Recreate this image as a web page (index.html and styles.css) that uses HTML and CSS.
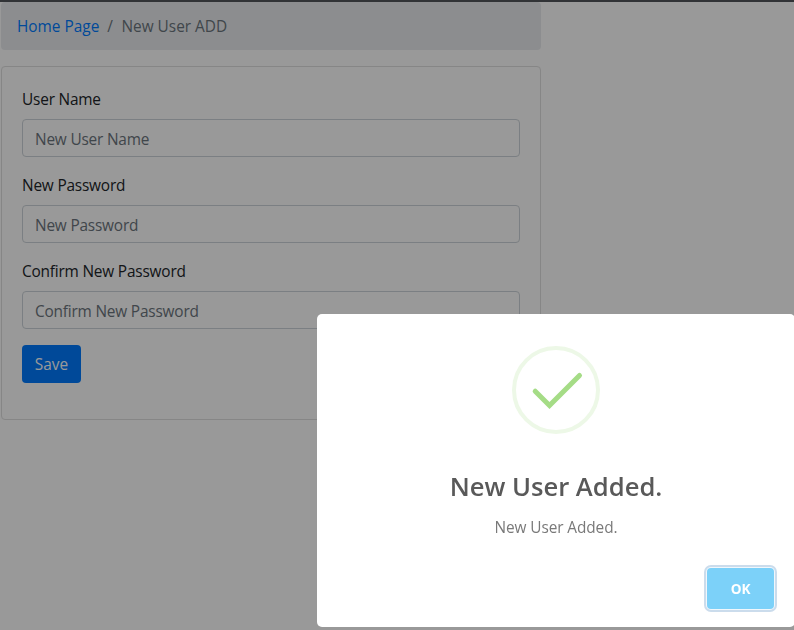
FILE: index.html
```html
<!DOCTYPE html>
<html lang="en">
<head>
<meta charset="utf-8">
<title>New User ADD</title>
<link rel="stylesheet" href="styles.css">
</head>
<body>
<div class="topbar"></div>
<main class="page">
  <nav class="breadcrumb"><a class="home" href="#">Home Page</a><span class="slash">/</span><span class="current">New User ADD</span></nav>
  <form class="card">
    <label class="label" for="user">User Name</label>
    <input class="input" id="user" placeholder="New User Name">
    <label class="label" for="pass">New Password</label>
    <input class="input" id="pass" placeholder="New Password">
    <label class="label" for="confirm">Confirm New Password</label>
    <input class="input" id="confirm" placeholder="Confirm New Password">
    <button class="save" type="button">Save</button>
  </form>
</main>
<div class="overlay">
  <section class="modal">
    <svg class="icon" width="88" height="88" viewBox="0 0 88 88">
      <circle cx="44" cy="44" r="42" fill="none" stroke="#edf8e7" stroke-width="4"/>
      <path d="M23.2 45.2 37.5 59.5 67.5 29.5" fill="none" stroke="#a5dc86" stroke-width="5" stroke-linecap="round"/>
    </svg>
    <h2 class="title">New User Added.</h2>
    <p class="text">New User Added.</p>
    <div class="footer"><button class="ok" type="button">OK</button></div>
  </section>
</div>
</body>
</html>
```
FILE: styles.css
```css
* { box-sizing: border-box; }
body {
  margin: 0;
  height: 630px;
  overflow: hidden;
  background: #fff;
  color: #212529;
  font: 15.4px/24px "Open Sans", "Noto Sans", sans-serif;
  letter-spacing: -.19px;
}
.topbar { height: 2px; background: #53565a; }
.page { width: 541px; padding-left: 1px; }
.breadcrumb {
  display: flex;
  height: 48px;
  padding: 13px 16px 11px;
  margin-bottom: 16px;
  border-radius: 4px;
  background: #e9ecef;
  color: #6c757d;
  letter-spacing: 0;
}
.home { color: #007bff; text-decoration: none; }
.slash { padding: 0 8px; }
.current { padding-left: .5px; }
.card {
  display: flex;
  flex-direction: column;
  align-items: flex-start;
  height: 354px;
  padding: 21px 20px 19px;
  border: 1px solid #dfdfdf;
  border-radius: 4px;
}
.label { margin-bottom: 7px; }
.input {
  width: 498px;
  height: 38px;
  margin: 0 0 17px;
  padding: 8px 12px 6px;
  border: 1px solid #ced4da;
  border-radius: 4px;
  background: #fff;
  font: inherit;
  letter-spacing: inherit;
}
.input::placeholder { color: #6c757d; opacity: 1; }
.save {
  width: 59px;
  height: 38px;
  margin-top: -1px;
  padding: 2px 0 0;
  border: 0;
  border-radius: 4px;
  background: #007bff;
  color: #fff;
  font: inherit;
}
.overlay {
  position: fixed;
  inset: 0;
  padding: 314px 0 0 317px;
  background: rgba(0, 0, 0, .4);
}
.modal {
  display: flex;
  flex-direction: column;
  align-items: center;
  width: 478px;
  height: 313px;
  padding-top: 32px;
  border-radius: 5px;
  background: #fff;
}
.title {
  margin: 35px 0 0;
  color: #595959;
  font-size: 25.6px;
  line-height: 36px;
  font-weight: 600;
  letter-spacing: 0;
}
.text {
  margin: 11px 0 0;
  color: #797979;
  line-height: 24px;
  letter-spacing: -.1px;
}
.footer {
  display: flex;
  justify-content: flex-end;
  width: 100%;
  margin-top: 28px;
  padding-right: 21px;
}
.ok {
  width: 67px;
  height: 41px;
  border: 0;
  border-radius: 4px;
  background: #7cd1f9;
  box-shadow: 0 0 0 1px #f0f7fc, 0 0 0 3px #cbdcec;
  color: #fff;
  font: 700 13.6px/20px "Open Sans", "Noto Sans", sans-serif;
  letter-spacing: -.2px;
}
```
